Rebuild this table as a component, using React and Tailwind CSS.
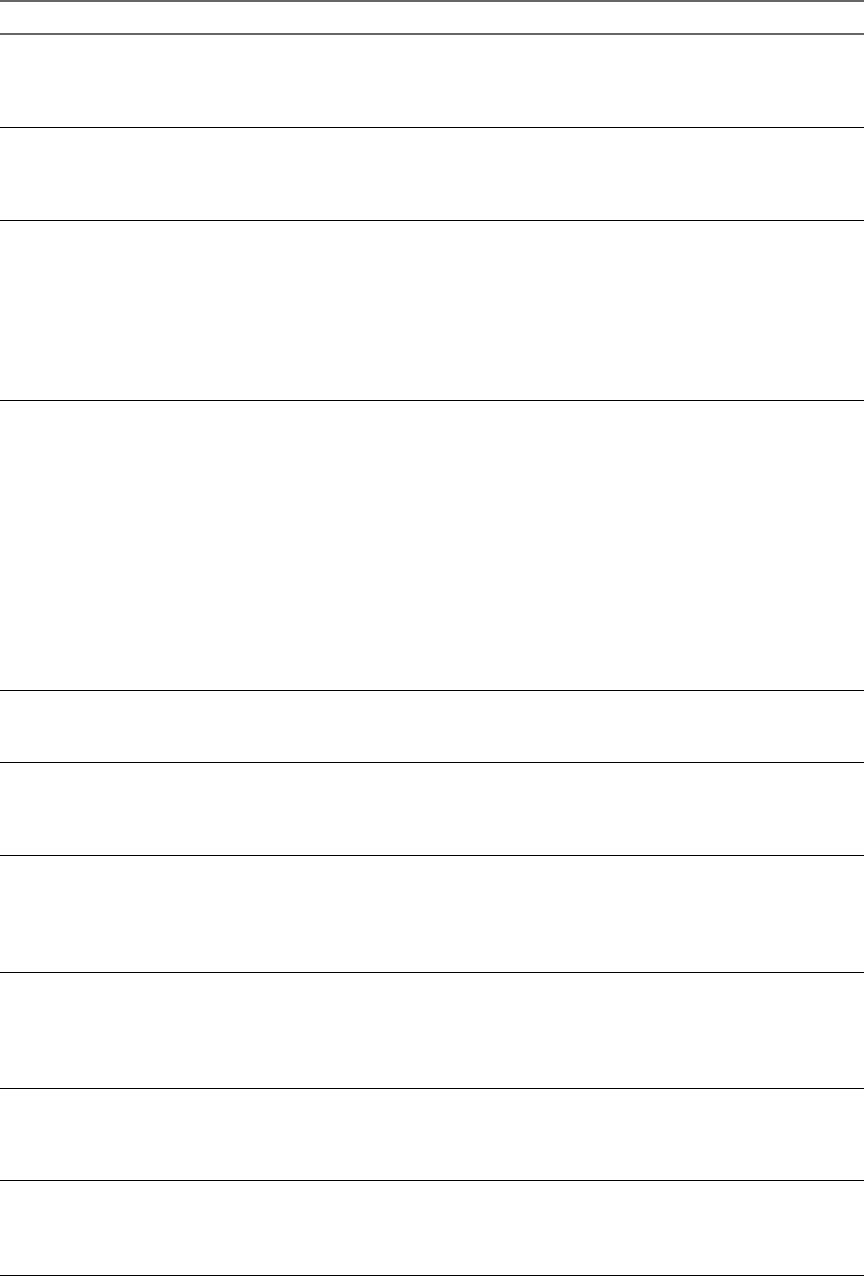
const rows = [
  'h-[93px]',
  'h-[93px]',
  'h-[180px]',
  'h-[290px]',
  'h-[72px]',
  'h-[93px]',
  'h-[117px]',
  'h-[116px]',
  'h-[92px]',
  'h-[95px]',
];

export default function App() {
  return (
    <div className="w-[864px] bg-white font-['Liberation_Sans',sans-serif]">
      {/* header rules */}
      <div className="h-[35px] border-t-2 border-b-2 border-[#666666]" />
      {rows.map((h, i) => (
        <div key={i} className={`${h} border-b border-black`} />
      ))}
    </div>
  );
}
